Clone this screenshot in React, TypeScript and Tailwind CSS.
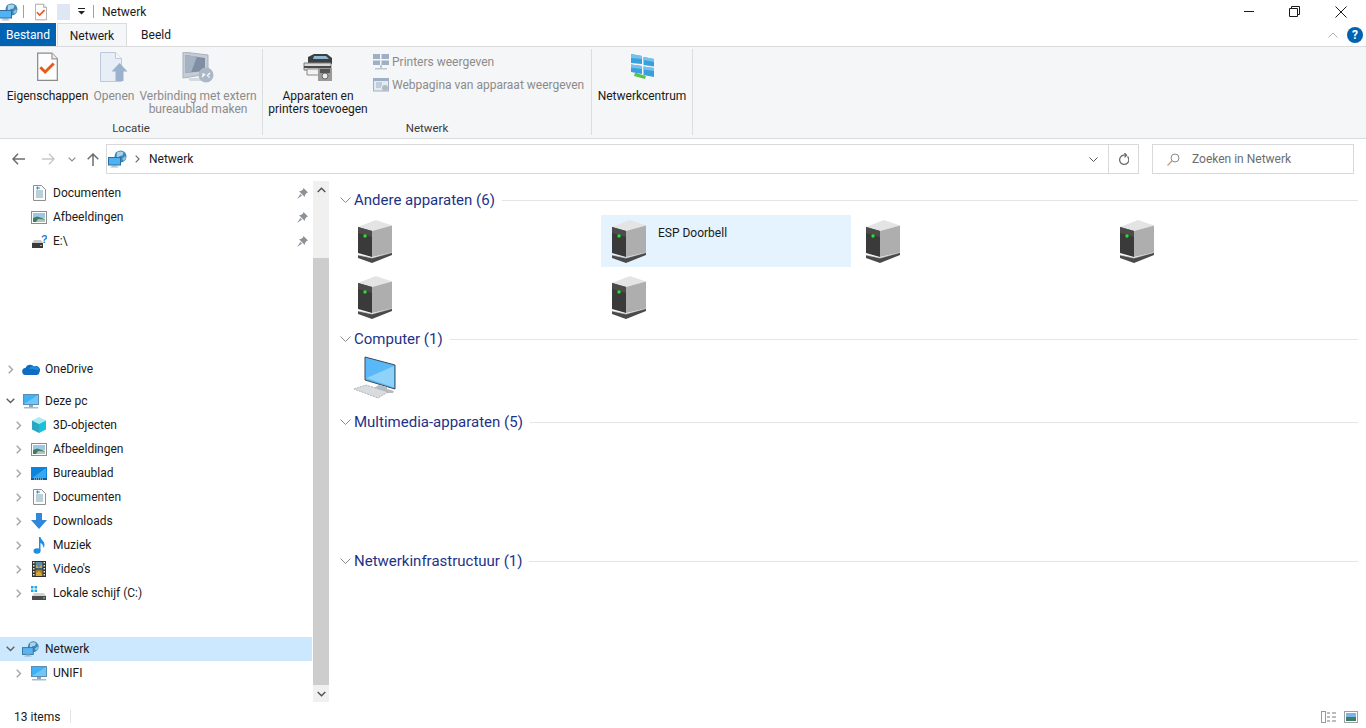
import type { ReactNode } from 'react';

const FONT = "font-['Roboto','Noto_Sans',sans-serif]";

function NetworkIcon({ dim = false }: { dim?: boolean }) {
  return (
    <svg width="20" height="18" viewBox="0 0 20 18">
      <circle cx="12.5" cy="6.5" r="6" fill="#3d86b8" />
      <path d="M9 2.5c2-1.5 5-1.5 6.500 0l-1 3-3 .5-1 3-2-1z" fill="#a8d4ea" />
      <path d="M14 9l3-3 1 2-2 3z" fill="#8cc2e0" />
      <rect x="0.500" y="7.500" width="12" height="7.500" fill={dim ? '#5bb4ef' : '#4fb2f5'} stroke="#2f6f9f" />
      <rect x="4" y="15" width="5" height="1.500" fill="#8aa6bb" />
      <rect x="2.500" y="16.500" width="8" height="1" fill="#a7bccb" />
    </svg>
  );
}

function CheckDoc({ size = 13 }: { size?: number }) {
  return (
    <svg width={size} height={size * 1.5} viewBox="0 0 22 30">
      <path d="M.7.7h15l5.600 6v22.600H.7z" fill="#fdfdfd" stroke="#8b8b8b" stroke-width="1.300" />
      <path d="M15.700.7v6h5.600" fill="#ececec" stroke="#9a9a9a" stroke-width="1.300" />
      <path d="M3.500 15.500l5 5 9-9" fill="none" stroke="#e8591c" stroke-width="3" />
    </svg>
  );
}

function OpenDoc() {
  return (
    <svg width="29" height="30" viewBox="0 0 29 30">
      <path d="M.5.500h15l6 6v23H.5z" fill="#e8eef8" stroke="#bcc8dc" />
      <path d="M15.500.500v6h6" fill="#f4f7fb" stroke="#bcc8dc" />
      <path d="M19.500 11l8 8.500h-4V29h-8v-9.500h-4z" fill="#9cb2cc" />
    </svg>
  );
}

function RemoteDesktop() {
  return (
    <svg width="32" height="31" viewBox="0 0 32 31">
      <path d="M1 0l25 3v19L1 26z" fill="#c5ccd6" stroke="#a9b1bb" />
      <path d="M3 3l20 3v13L3 21z" fill="#7f8ea3" />
      <path d="M3 3l12 1.500-6 16L3 21z" fill="#a5b2c3" />
      <path d="M6 26h14l4 3H8z" fill="#d5dae0" />
      <circle cx="24" cy="23" r="7.500" fill="#aab8c8" />
      <path d="M20 25l3-3M28 21l-3 3M20 22h2M26 25h2" stroke="#fff" stroke-width="1.200" />
    </svg>
  );
}

function PrinterAdd() {
  return (
    <svg width="30" height="28" viewBox="0 0 30 28">
      <path d="M5 4l6-3h13l5 4v6H5z" fill="#3c3f42" />
      <path d="M11 3h12l3 3H10z" fill="#8fb9cf" />
      <path d="M1 10h27v7H1z" fill="#d8d8d8" stroke="#7c7c7c" />
      <path d="M1 13h27v2H1z" fill="#4a4a4a" />
      <path d="M4 16h13v6H4z" fill="#f1f1f1" stroke="#8a8a8a" />
      <rect x="15" y="15" width="14" height="13" fill="#9a9a9a" />
      <rect x="17" y="16" width="10" height="4" fill="#555" />
      <circle cx="22" cy="23" r="3" fill="#ececec" stroke="#666" />
    </svg>
  );
}

function WindowsNet() {
  return (
    <svg width="25" height="26" viewBox="0 0 25 26">
      <path d="M1 0l11 2v8L1 9zM13.500 3L24 5v7.500l-10.500-1.500zM1 10.500l11 1.500v8l-11-2zM13.500 12.500L24 14v9l-10.500-2z" fill="#38a0dc" />
      <path d="M1 0l11 2v3L1 4zM13.500 3L24 5v3l-10.500-2zM1 10.500l11 1.500v3l-11-1.500zM13.500 12.500L24 14v3l-10.500-1.500z" fill="#74c3ee" />
      <path d="M5 18.500l11 3.500-1 3-11-3z" fill="#5cc24d" />
    </svg>
  );
}

function PrintersSmall() {
  return (
    <svg width="16" height="16" viewBox="0 0 16 16">
      <path d="M0 0h7v5H0zM8.500 0H16v5H8.500zM0 6.500h7V11H0zM8.500 6.500H16V11H8.500z" fill="#9fb0c6" />
      <path d="M7 11h2v3H7zM2 14h12v1.500H2z" fill="#bcc7d4" />
    </svg>
  );
}

function WebSmall() {
  return (
    <svg width="16" height="14" viewBox="0 0 16 14">
      <rect x=".5" y=".5" width="15" height="12.500" fill="#e4eaf2" stroke="#9fb0c6" />
      <rect x="1" y="1" width="14" height="2" fill="#9fb0c6" />
      <path d="M3 5h6M3 7h6M3 9h5" stroke="#9fb0c6" />
      <circle cx="12" cy="10" r="3" fill="#b3b9c1" />
    </svg>
  );
}

function DocsIcon() {
  return (
    <svg width="13" height="16" viewBox="0 0 13 16">
      <path d="M.5.500h8l4 4v11H.5z" fill="#fbfbfb" stroke="#8f8f8f" />
      <path d="M3 6h7M3 8h7M3 10h7M3 12h7" stroke="#7ba4b6" />
      <path d="M3 3h4M4.500 1.500v3" stroke="#2b8fd6" />
    </svg>
  );
}

function PicturesIcon() {
  return (
    <svg width="16" height="13" viewBox="0 0 16 13">
      <rect x=".5" y=".5" width="15" height="12" fill="#fff" stroke="#8d8d8d" />
      <rect x="2" y="2" width="12" height="5" fill="#9cc7e8" />
      <path d="M2 7l4-1.500L14 8v3H2z" fill="#3f7d5f" />
      <path d="M7 8l7 .5V11H5z" fill="#b2c5bc" />
    </svg>
  );
}

function UnknownDrive() {
  return (
    <svg width="16" height="15" viewBox="0 0 16 15">
      <path d="M1 9l2-3h7l2 3z" fill="#c8c8c8" />
      <rect x="1" y="9" width="11" height="5" fill="#3a3a3a" />
      <rect x="9" y="11" width="2" height="1" fill="#5fe05f" />
      <text x="10" y="9" fontSize="11" fontWeight="700" fill="#1d7fd1" fontFamily="Liberation Sans">?</text>
    </svg>
  );
}

function CloudIcon() {
  return (
    <svg width="18" height="11" viewBox="0 0 18 11">
      <path d="M4 11a3.500 3.500 0 0 1-.6-7A5 5 0 0 1 12 2.600 4 4 0 0 1 17.500 8 3 3 0 0 1 15 11z" fill="#0f6cc0" />
      <path d="M7 5a4 4 0 0 1 5-2.400 4 4 0 0 1 5 4L11 5z" fill="#1c8bdc" />
    </svg>
  );
}

function MonitorIcon() {
  return (
    <svg width="16" height="15" viewBox="0 0 16 15">
      <rect x=".5" y=".5" width="15" height="10" fill="#3fb1f6" stroke="#5d8eaf" />
      <path d="M1 10l14-9v9z" fill="#6ec7f8" />
      <rect x="6" y="11" width="4" height="2" fill="#8da5b5" />
      <rect x="1" y="13" width="14" height="1.500" fill="#a7bccb" />
    </svg>
  );
}

function CubeIcon() {
  return (
    <svg width="16" height="16" viewBox="0 0 16 16">
      <path d="M8 0l7 3.500L8 7 1 3.500z" fill="#a7edf5" />
      <path d="M1 3.500L8 7v9l-7-3.500z" fill="#2ba7c4" />
      <path d="M15 3.500L8 7v9l7-3.500z" fill="#18c0d8" />
    </svg>
  );
}

function DesktopIcon() {
  return (
    <svg width="16" height="13" viewBox="0 0 16 13">
      <rect width="16" height="13" fill="#0a84dc" />
      <path d="M1 11L15 1v10z" fill="#36a8f2" />
      <rect y="11" width="16" height="2" fill="#0b5c9c" />
      <path d="M3 12h9" stroke="#cfe6f7" strokeDasharray="1 1" />
    </svg>
  );
}

function DownloadIcon() {
  return (
    <svg width="16" height="16" viewBox="0 0 16 16">
      <path d="M5 0h6v7h5l-8 9-8-9h5z" fill="#2f88dc" />
    </svg>
  );
}

function MusicIcon() {
  return (
    <svg width="12" height="17" viewBox="0 0 12 17">
      <ellipse cx="4" cy="14" rx="3.500" ry="2.800" fill="#1c8fe3" />
      <path d="M6 14V0h1.500c.5 3 4 4 4 8 0 1-.3 2-1 3 0-3-2-4.500-3-5v8z" fill="#1c8fe3" />
    </svg>
  );
}

function VideoIcon() {
  return (
    <svg width="14" height="16" viewBox="0 0 14 16">
      <rect width="14" height="16" fill="#2f2f2f" />
      <path d="M1 1h1.500v1.500H1zM1 4h1.500v1.500H1zM1 7h1.500v1.500H1zM1 10h1.500v1.500H1zM1 13h1.500v1.500H1zM11.500 1H13v1.500h-1.500zM11.500 4H13v1.500h-1.500zM11.500 7H13v1.500h-1.500zM11.500 10H13v1.500h-1.500zM11.500 13H13v1.500h-1.500z" fill="#e8e8e8" />
      <rect x="3.500" y="1" width="7" height="6.500" fill="#5d8ca8" />
      <rect x="3.500" y="8.500" width="7" height="6.500" fill="#9d7f3d" />
      <path d="M4 4l3 3 3-4v4H4zM4 12l3-2 3 3v2H4z" fill="#d6a928" />
    </svg>
  );
}

function SystemDrive() {
  return (
    <svg width="16" height="15" viewBox="0 0 16 15">
      <path d="M0 0h2.500v2.500H0zM3.500 0H6v2.500H3.500zM0 3.500h2.500V6H0zM3.500 3.500H6V6H3.500z" fill="#1ea7e8" />
      <path d="M1 10l2-3h10l2 3z" fill="#d2d2d2" />
      <rect x="1" y="10" width="14" height="4" fill="#4a4a4a" />
      <rect x="12" y="11.500" width="2" height="1" fill="#62e262" />
    </svg>
  );
}

function ServerIcon() {
  return (
    <svg width="34" height="43" viewBox="0 0 34 43" className="shrink-0">
      <path d="M0 7L18 0l16 5.500L14 11z" fill="#e4e4e4" />
      <path d="M14 11L34 5.500v27L14 37z" fill="#aeaeae" />
      <path d="M0 7l14 4v26L0 33z" fill="#3a3a3a" />
      <path d="M0 7l14 4v6L0 13z" fill="#4b4b4b" />
      <circle cx="7" cy="16" r="1.700" fill="#27e027" />
      <path d="M0 35l14 3 20-5.500V35L14 43 0 38z" fill="#4a4a4a" />
      <path d="M0 35l14 3 20-5.500" fill="none" stroke="#cfcfcf" strokeWidth=".7" />
    </svg>
  );
}

function ComputerIcon() {
  return (
    <svg width="44" height="44" viewBox="0 0 44 44" className="shrink-0">
      <path d="M12 1l30 8v24L12 24z" fill="#58b8f8" stroke="#3d4a55" />
      <path d="M13.500 22L41 10v21.500z" fill="#8ed2fa" />
      <path d="M26 29l8 2v2l7 2-1 2H30l-10-3 1-2z" fill="#b5bbc0" />
      <path d="M1 33l12-4 22 7-10 6z" fill="#d8dcdf" stroke="#aeb4b8" strokeDasharray="2 1" />
    </svg>
  );
}

function Pin() {
  return (
    <svg width="11" height="11" viewBox="0 0 11 11" className="shrink-0">
      <path d="M6.500 0L11 4.500 9.500 5 8 7l-.2 2L2 3.200 4 3l2-1.500zM3.500 6L0 11l5-3.500z" fill="#8a9299" />
    </svg>
  );
}

function Chevron({ open }: { open: boolean }) {
  return open ? (
    <svg width="9" height="6" viewBox="0 0 9 6"><path d="M.7.700l3.800 3.800L8.300.7" fill="none" stroke="#5f5f5f" strokeWidth="1.400" /></svg>
  ) : (
    <svg width="6" height="9" viewBox="0 0 6 9"><path d="M.7.700l3.800 3.800L.7 8.300" fill="none" stroke="#a6a6a6" strokeWidth="1.400" /></svg>
  );
}

function TreeRow({ icon, label, level, open, pinned, selected, hasChevron = true }: {
  icon: ReactNode;
  label: string;
  level: 0 | 1;
  open?: boolean;
  pinned?: boolean;
  selected?: boolean;
  hasChevron?: boolean;
}) {
  return (
    <div className={`flex h-6 items-center ${selected ? 'bg-[#cce8ff]' : ''} ${level === 1 ? 'pl-[14px]' : 'pl-[6px]'}`}>
      <span className="flex w-[9px] justify-center">{hasChevron && <Chevron open={!!open} />}</span>
      <span className="ml-[7px] flex w-[18px] justify-center">{icon}</span>
      <span className="ml-[5px] flex-1 text-[12px] text-[#1a1a1a]">{label}</span>
      {pinned && <span className="mr-[4px] flex"><Pin /></span>}
    </div>
  );
}

function GroupHeader({ label, lineOffset }: { label: string; lineOffset?: string }) {
  return (
    <div className={`flex h-6 items-center pl-[11px] pr-[8px] ${lineOffset ?? ''}`}>
      <svg width="11" height="7" viewBox="0 0 11 7"><path d="M.5.500l5 5 5-5" fill="none" stroke="#8a8a8a" /></svg>
      <span className="ml-[3px] text-[15px] text-[#1e3287]">{label}</span>
      <span className="ml-[7px] h-px flex-1 bg-[#e5e5e5]" />
    </div>
  );
}

function DeviceTile({ name, selected }: { name?: string; selected?: boolean }) {
  return (
    <div className={`flex h-[52px] w-[250px] items-start pl-[11px] pt-[5px] ${selected ? 'bg-[#e5f3ff]' : ''}`}>
      <ServerIcon />
      {name && <span className="ml-[12px] mt-[4px] text-[12px] text-[#1a1a1a]">{name}</span>}
    </div>
  );
}

function RibbonButton({ icon, lines, disabled, width }: { icon: ReactNode; lines: string[]; disabled?: boolean; width: string }) {
  return (
    <div className={`flex shrink-0 flex-col items-center ${width}`}>
      <div className="flex h-[36px] items-center justify-center">{icon}</div>
      <div className={`mt-[5px] text-center text-[12px] leading-[13px] ${disabled ? 'text-[#8b8b8b]' : 'text-[#1a1a1a]'}`}>
        {lines.map((l) => <div key={l}>{l}</div>)}
      </div>
    </div>
  );
}

function RibbonGroup({ label, width, children }: { label: string; width: string; children: ReactNode }) {
  return (
    <div className={`flex h-[86px] shrink-0 flex-col border-r border-[#dcdddf] ${width}`}>
      <div className="flex flex-1 items-start">{children}</div>
      <div className="h-[13px] text-center text-[11.500px] leading-[13px] text-[#3c3c3c]">{label}</div>
    </div>
  );
}

const QUICK = [
  { label: 'Documenten', icon: <DocsIcon /> },
  { label: 'Afbeeldingen', icon: <PicturesIcon /> },
  { label: 'E:\\', icon: <UnknownDrive /> },
];

const THIS_PC = [
  { label: '3D-objecten', icon: <CubeIcon /> },
  { label: 'Afbeeldingen', icon: <PicturesIcon /> },
  { label: 'Bureaublad', icon: <DesktopIcon /> },
  { label: 'Documenten', icon: <DocsIcon /> },
  { label: 'Downloads', icon: <DownloadIcon /> },
  { label: 'Muziek', icon: <MusicIcon /> },
  { label: "Video's", icon: <VideoIcon /> },
  { label: 'Lokale schijf (C:)', icon: <SystemDrive /> },
];

export default function App() {
  return (
    <div className={`flex h-[728px] w-[1366px] flex-col overflow-hidden bg-white ${FONT}`}>
      {/* title bar */}
      <div className="flex h-[23px] shrink-0 items-center">
        <span className="ml-[-1px] flex"><NetworkIcon /></span>
        <span className="ml-[4px] h-[13px] w-px bg-[#a0a0a0]" />
        <span className="ml-[11px] flex"><CheckDoc size={12} /></span>
        <span className="ml-[10px] h-[16px] w-[13px] bg-[#dfe7f5]" />
        <svg width="8" height="7" viewBox="0 0 8 7" className="ml-[8px]"><path d="M0 0h7v1H0zM0 3h7L3.500 6.500z" fill="#222" /></svg>
        <span className="ml-[7px] h-[13px] w-px bg-[#a0a0a0]" />
        <span className="ml-[8px] text-[12px] text-[#1a1a1a]">Netwerk</span>
        <div className="ml-auto flex items-center">
          <span className="h-px w-[10px] bg-[#1a1a1a]" />
          <svg width="11" height="11" viewBox="0 0 11 11" className="ml-[35px]">
            <path d="M.5 2.500h8v8h-8zM2.500 2.500v-2h8v8h-2" fill="none" stroke="#1a1a1a" />
          </svg>
          <svg width="12" height="12" viewBox="0 0 12 12" className="ml-[35px] mr-[19px]">
            <path d="M.5.500l11 11M11.500.5l-11 11" stroke="#1a1a1a" />
          </svg>
        </div>
      </div>

      {/* tabs */}
      <div className="flex h-[23px] shrink-0 items-stretch text-[12px]">
        <div className="flex w-[56px] items-center justify-center bg-[#0063b1] text-white">Bestand</div>
        <div className="-mb-px ml-px flex w-[70px] items-center justify-center border-x border-t border-[#dadbdc] bg-[#f5f6f7] text-[#1a1a1a]">Netwerk</div>
        <div className="flex w-[58px] items-center justify-center text-[#1a1a1a]">Beeld</div>
        <div className="ml-auto flex items-center">
          <svg width="10" height="6" viewBox="0 0 10 6"><path d="M.5 5.500l4.500-4.500 4.500 4.500" fill="none" stroke="#b0b0b0" /></svg>
          <div className="ml-[9px] mr-[3px] flex h-4 w-4 items-center justify-center rounded-full bg-[#0063b1] text-[12px] font-bold text-white">?</div>
        </div>
      </div>

      {/* ribbon */}
      <div className="flex h-[93px] shrink-0 items-start border-y border-[#dadbdc] bg-[#f5f6f7] pt-[2px]">
        <RibbonGroup label="Locatie" width="w-[263px]">
          <RibbonButton width="w-[90px] pl-[5px]" icon={<CheckDoc size={21} />} lines={['Eigenschappen']} />
          <RibbonButton width="w-[48px]" disabled icon={<OpenDoc />} lines={['Openen']} />
          <RibbonButton width="w-[120px]" disabled icon={<RemoteDesktop />} lines={['Verbinding met extern', 'bureaublad maken']} />
        </RibbonGroup>
        <RibbonGroup label="Netwerk" width="w-[329px]">
          <RibbonButton width="w-[110px]" icon={<PrinterAdd />} lines={['Apparaten en', 'printers toevoegen']} />
          <div className="mt-[5px] flex flex-col gap-[7px] text-[12px] text-[#8b8b8b]">
            <div className="flex h-4 items-center gap-[3px]"><PrintersSmall />Printers weergeven</div>
            <div className="flex h-4 items-center gap-[3px]"><WebSmall />Webpagina van apparaat weergeven</div>
          </div>
        </RibbonGroup>
        <RibbonGroup label="" width="w-[101px]">
          <RibbonButton width="w-full" icon={<WindowsNet />} lines={['Netwerkcentrum']} />
        </RibbonGroup>
      </div>

      {/* address bar */}
      <div className="flex h-[39px] shrink-0 items-center pt-[1px]">
        <svg width="13" height="12" viewBox="0 0 13 12" className="ml-[12px]"><path d="M6 .7L1 6l5 5.300M1 6h12" fill="none" stroke="#6d6d6d" strokeWidth="1.500" /></svg>
        <svg width="13" height="12" viewBox="0 0 13 12" className="ml-[17px]"><path d="M7 .7L12 6l-5 5.300M12 6H0" fill="none" stroke="#c9c9c9" strokeWidth="1.500" /></svg>
        <svg width="8" height="5" viewBox="0 0 8 5" className="ml-[13px]"><path d="M.7.700L4 4 7.300.7" fill="none" stroke="#8a8a8a" strokeWidth="1.200" /></svg>
        <svg width="12" height="13" viewBox="0 0 12 13" className="ml-[11px]"><path d="M.7 6.300L6 1l5.300 5.300M6 1v12" fill="none" stroke="#6d6d6d" strokeWidth="1.500" /></svg>
        <div className="ml-[7px] flex h-[30px] w-[1033px] items-center border border-[#d9d9d9]">
          <span className="ml-[1px] flex"><NetworkIcon /></span>
          <svg width="5" height="8" viewBox="0 0 5 8" className="ml-[7px]"><path d="M.7.700L4 4 .7 7.300" fill="none" stroke="#6f6f6f" strokeWidth="1.200" /></svg>
          <span className="ml-[9px] text-[12px] text-[#1a1a1a]">Netwerk</span>
          <svg width="9" height="5" viewBox="0 0 9 5" className="ml-auto mr-[10px]"><path d="M.5.500l4 4 4-4" fill="none" stroke="#555" /></svg>
          <div className="flex h-full w-[30px] items-center justify-center border-l border-[#d9d9d9]">
            <svg width="11" height="12" viewBox="0 0 11 12"><path d="M9.500 3.500A4.600 4.600 0 1 1 5.500 2.200H8M6.500 0l2 2.200-2 2.200" fill="none" stroke="#6d6d6d" strokeWidth="1.300" /></svg>
          </div>
        </div>
        <div className="ml-[13px] flex h-[30px] w-[202px] items-center border border-[#d9d9d9] text-[12px] text-[#6d6d6d]">
          <svg width="13" height="13" viewBox="0 0 13 13" className="ml-[14px]"><circle cx="8" cy="5" r="4" fill="none" stroke="#8a8a8a" /><path d="M5 8l-4.500 4.500" stroke="#c59a7a" strokeWidth="1.200" /></svg>
          <span className="ml-[12px]">Zoeken in Netwerk</span>
        </div>
      </div>

      {/* body */}
      <div className="flex min-h-0 flex-1">
        {/* nav tree */}
        <div className="flex h-[524px] w-[329px] shrink-0 pt-[3px]">
          <div className="w-[312px] shrink-0">
            {QUICK.map((q) => (
              <TreeRow key={q.label} level={1} hasChevron={false} pinned icon={q.icon} label={q.label} />
            ))}
            <div className="h-[104px]" />
            <TreeRow level={0} icon={<CloudIcon />} label="OneDrive" />
            <div className="h-2" />
            <TreeRow level={0} open icon={<MonitorIcon />} label="Deze pc" />
            {THIS_PC.map((p) => (
              <TreeRow key={p.label} level={1} icon={p.icon} label={p.label} />
            ))}
            <div className="h-8" />
            <TreeRow level={0} open selected icon={<NetworkIcon dim />} label="Netwerk" />
            <TreeRow level={1} icon={<MonitorIcon />} label="UNIFI" />
          </div>
          <div className="ml-px flex w-[16px] shrink-0 flex-col bg-[#f0f0f0]">
            <div className="flex h-[17px] items-center justify-center">
              <svg width="9" height="6" viewBox="0 0 9 6"><path d="M.7 5L4.500 1.200 8.300 5" fill="none" stroke="#505050" strokeWidth="1.400" /></svg>
            </div>
            <div className="mt-[60px] flex-1 bg-[#cdcdcd]" />
            <div className="flex h-[17px] items-center justify-center">
              <svg width="9" height="6" viewBox="0 0 9 6"><path d="M.7 1L4.500 4.800 8.300 1" fill="none" stroke="#505050" strokeWidth="1.400" /></svg>
            </div>
          </div>
        </div>

        {/* content */}
        <div className="flex-1 pt-[10px]">
          <GroupHeader label="Andere apparaten (6)" />
          <div className="mt-[3px] grid grid-cols-[repeat(4,254px)] gap-y-[4px] pl-[18px]">
            <DeviceTile />
            <DeviceTile name="ESP Doorbell" selected />
            <DeviceTile />
            <DeviceTile />
            <DeviceTile />
            <DeviceTile />
          </div>
          <div className="mt-[4px]">
            <GroupHeader label="Computer (1)" />
          </div>
          <div className="flex h-[59px] items-start pl-[24px] pt-[5px]">
            <ComputerIcon />
          </div>
          <GroupHeader label="Multimedia-apparaten (5)" />
          <div className="h-[115px]" />
          <GroupHeader label="Netwerkinfrastructuur (1)" />
        </div>
      </div>

      {/* status bar */}
      <div className="flex h-[23px] shrink-0 items-center text-[12px] text-[#1a1a1a]">
        <span className="ml-[14px]">13 items</span>
        <span className="ml-[10px] h-[13px] w-px bg-[#e3e3e3]" />
        <svg width="16" height="12" viewBox="0 0 16 12" className="ml-auto">
          <rect x=".5" y=".5" width="4" height="11" fill="#fff" stroke="#9a9a9a" />
          <path d="M6 2h3M11 2h4M6 6h3M11 6h4M6 10h3M11 10h4" stroke="#7a7a7a" />
        </svg>
        <svg width="14" height="12" viewBox="0 0 14 12" className="ml-[7px] mr-[8px]">
          <rect x=".5" y=".5" width="13" height="11" fill="#fff" stroke="#a0a0a0" />
          <rect x="2" y="2" width="10" height="4" fill="#79b8e6" />
          <rect x="2" y="6" width="10" height="4" fill="#3f7d6a" />
        </svg>
      </div>
    </div>
  );
}
